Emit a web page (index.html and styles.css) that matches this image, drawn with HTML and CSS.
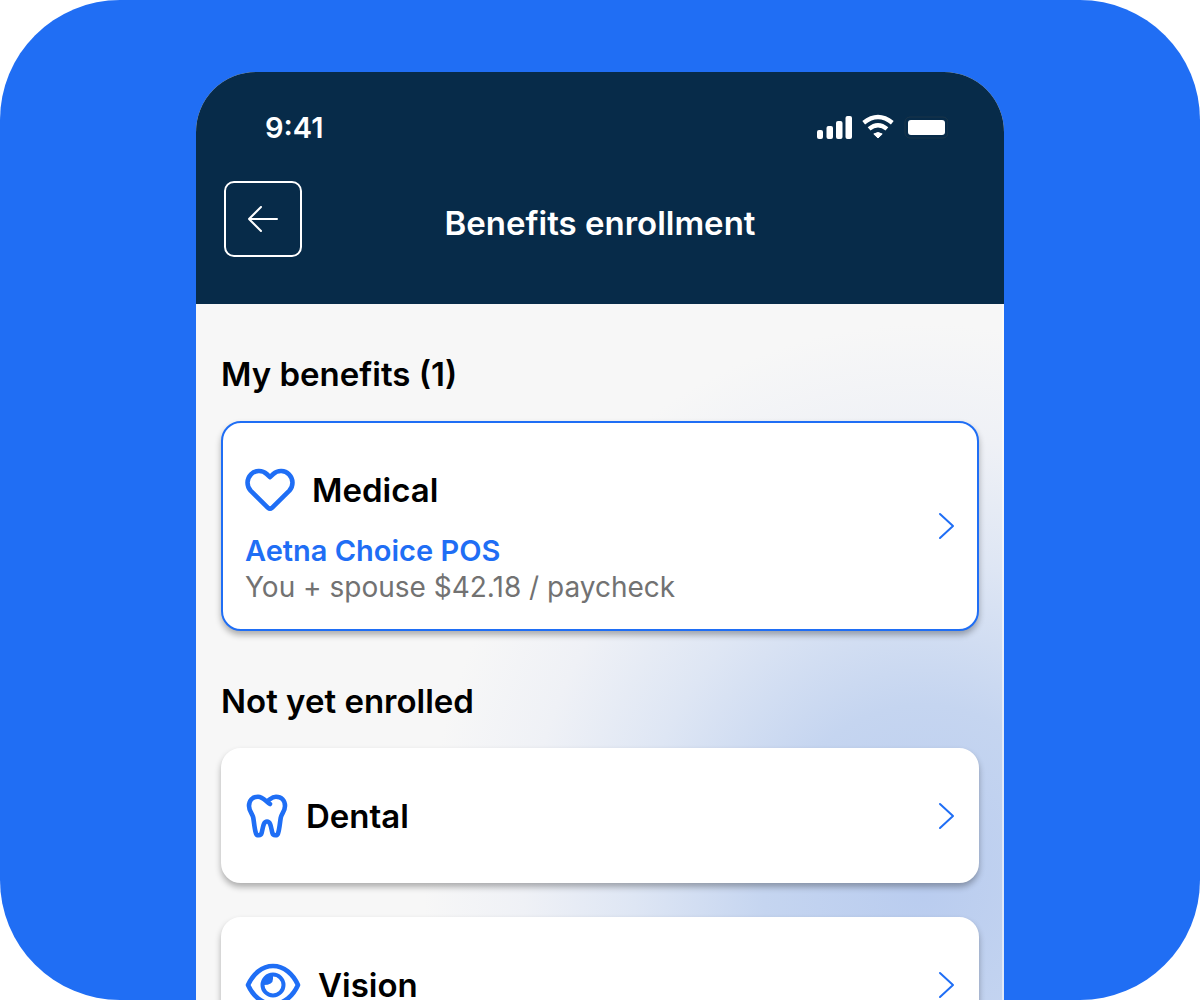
FILE: index.html
```html
<!DOCTYPE html>
<html lang="en">
<head>
    <meta charset="UTF-8">
    <meta name="viewport" content="width=device-width, initial-scale=1.0">
    <title>Benefits enrollment</title>
    <link rel="stylesheet" href="styles.css">
</head>
<body>
    <div class="stage">
        <div class="phone">
            <header class="header">
                <div class="status-bar">
                    <span class="time">9:41</span>
                    <svg class="status-icons" width="132" height="28" viewBox="0 0 132 28" aria-hidden="true">
                        <g fill="#fff">
                            <rect x="1" y="16" width="6" height="9" rx="2"/>
                            <rect x="10.500" y="12" width="6.500" height="13" rx="2"/>
                            <rect x="20" y="7" width="6.500" height="18" rx="2"/>
                            <rect x="29.500" y="2" width="6.500" height="23" rx="2"/>
                            <path d="M62 24 57.800 20Q62 17 66.200 20Z" stroke="#fff" stroke-linejoin="round"/>
                            <rect x="92" y="6" width="37" height="15" rx="3"/>
                        </g>
                        <g fill="none" stroke="#fff" stroke-width="4.400">
                            <path d="M47.700 8.800Q62-2.700 76.300 8.800"/>
                            <path d="M53.100 14.900Q62 7.500 70.900 14.900"/>
                        </g>
                        <rect x="89" y="3" width="43" height="21" rx="5" fill="none" stroke="#1b3549" stroke-width="1"/>
                    </svg>
                </div>
                <div class="nav-bar">
                    <button type="button" class="back" aria-label="Back">
                        <svg width="30" height="26" viewBox="0 0 30 26" fill="none" stroke="#fff" stroke-width="2" stroke-linecap="round" stroke-linejoin="round">
                            <path d="M29 13H1M13 1 1 13 13 25"/>
                        </svg>
                    </button>
                    <h1>Benefits enrollment</h1>
                </div>
            </header>

            <main class="content">
                <h2>My benefits (1)</h2>
                <a class="card card-enrolled" href="#medical">
                    <div class="card-body">
                        <div class="card-title">
                            <svg width="50" height="44" viewBox="0 0 50 44" fill="none" stroke="#1f6ef5" stroke-width="4.600" stroke-linejoin="round">
                                <path d="M25 9.200 21.700 6C17 1.600 10 2.200 6 6.300C1.400 11 1.500 18 5.600 22.600L23 39.800Q25 41.600 27 39.800L44.400 22.600C48.500 18 48.600 11 44 6.300C40 2.200 33 1.600 28.300 6Z"/>
                            </svg>
                            <h3>Medical</h3>
                        </div>
                        <p class="plan">Aetna Choice POS</p>
                        <p class="cost">You + spouse $42.18 / paycheck</p>
                    </div>
                    <svg class="chevron" width="18" height="28" viewBox="0 0 18 28"><path d="M3 2 16 14 3 26"/></svg>
                </a>

                <h2>Not yet enrolled</h2>
                <a class="card" href="#dental">
                    <div class="card-body">
                        <div class="card-title">
                            <svg width="44" height="44" viewBox="-1 0 44 44" fill="none" stroke="#1f6ef5" stroke-width="4.600" stroke-linecap="round" stroke-linejoin="round">
                                <path d="M24 10C20 8 17.500 2.700 12 2.700C6.500 2.700 3 6.500 3 12C3 17 6.500 19.500 7.300 24C8.300 30 8.500 35 10 39.500C10.800 42 14.700 42 15.600 39C17 34.500 17 27.500 21 27.500C25 27.500 25 34.500 26.400 39C27.300 42 31.200 42 32 39.500C33.500 35 33.700 30 34.700 24C35.500 19.500 39 17 39 12C39 6.500 35.500 2.700 30 2.700C26 2.700 24 5.500 21 7.200"/>
                            </svg>
                            <h3>Dental</h3>
                        </div>
                    </div>
                    <svg class="chevron" width="18" height="28" viewBox="0 0 18 28"><path d="M3 2 16 14 3 26"/></svg>
                </a>
                <a class="card" href="#vision">
                    <div class="card-body">
                        <div class="card-title">
                            <svg width="56" height="44" viewBox="0 0 56 44" fill="none" stroke="#1f6ef5" stroke-width="4.600" stroke-linejoin="round">
                                <path d="M3 22C8 11 17 3 28 3C39 3 48 11 53 22C48 33 39 41 28 41C17 41 8 33 3 22Z"/>
                                <circle cx="28" cy="22" r="10.500" stroke-width="4"/>
                                <path d="M28 12.500V16Q28 22 18.500 22Q18.500 12.500 28 12.500Z" fill="#1f6ef5" stroke="none"/>
                            </svg>
                            <h3>Vision</h3>
                        </div>
                    </div>
                    <svg class="chevron" width="18" height="28" viewBox="0 0 18 28"><path d="M3 2 16 14 3 26"/></svg>
                </a>
            </main>
        </div>
    </div>
</body>
</html>
```

FILE: styles.css
```css
* { box-sizing: border-box; }
body { margin: 0; background-color: #fff; font-family: Inter, "Liberation Sans", sans-serif; color: #000; }
h1, h2, h3, p { margin: 0; }
h1, h2, h3 { font-size: 33px; line-height: 44px; font-weight: 600; }

.stage { height: 100vh; padding: 72px 24px 0; background-color: #206ef4; border-radius: 120px; overflow: hidden; }
.phone { max-width: 808px; min-height: 100%; margin: 0 auto; border-radius: 60px 60px 0 0; overflow: hidden; background-color: #f7f7f7; }

/* header */
.header { padding: 38px 28px 47px; background-color: #072b49; color: #fff; }
.status-bar { display: flex; justify-content: space-between; align-items: center; padding: 0 28px 0 41px; }
.time { font-size: 29px; line-height: 36px; font-weight: 600; }
.nav-bar { display: grid; grid-template-columns: 78px 1fr 78px; align-items: center; margin-top: 35px; }
.nav-bar h1 { text-align: center; padding-top: 8px; }
.back { display: flex; align-items: center; justify-content: center; height: 76px; padding: 0; background: none; border: 2px solid #fff; border-radius: 10px; cursor: pointer; }

/* page content */
.content {
    padding: 48px 25px 34px;
    background: radial-gradient(ellipse 500px 560px at 90% 580px, #b9ccef 0%, #c5d5f0 32%, #dee6f4 58%, #eff1f6 80%, #f7f7f7 100%);
    box-shadow: inset -2px 0 rgba(255, 255, 255, 0.5);
}
.content h2 { margin-bottom: 25px; }
.card { display: flex; align-items: center; justify-content: space-between; padding: 0 22px; margin-bottom: 34px; background-color: #fff; border: 2px solid #fff; border-radius: 20px; box-shadow: 0 4px 6px rgba(0, 0, 0, 0.3); text-decoration: none; color: #000; }
.card-enrolled { margin-bottom: 48px; border-color: #1f6ef5; }
.card-title { display: flex; align-items: center; gap: 17px; padding: 44px 0 43px; }
.card-enrolled .card-body { padding-bottom: 23px; }
.card-enrolled .card-title { padding: 45px 0 20px; }
.plan, .cost { line-height: 37px; }
.plan { color: #1f6ef5; font-size: 29px; font-weight: 600; }
.cost { color: #727272; font-size: 28px; }
.chevron { flex: none; fill: none; stroke: #1f6ef5; stroke-width: 2; stroke-linecap: round; stroke-linejoin: round; }
```
